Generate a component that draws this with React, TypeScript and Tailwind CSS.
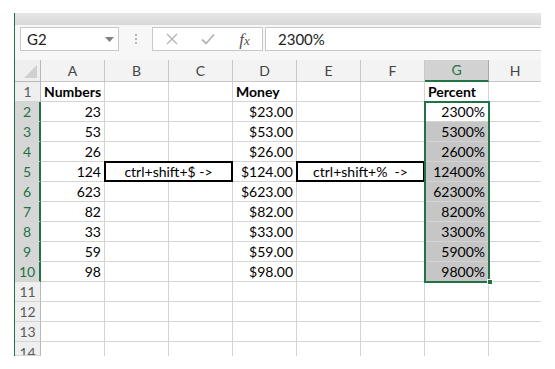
import React from "react";

const cols = ["A", "B", "C", "D", "E", "F", "G", "H"];
const nums = ["23", "53", "26", "124", "623", "82", "33", "59", "98"];
const money = ["$23.00", "$53.00", "$26.00", "$124.00", "$623.00", "$82.00", "$33.00", "$59.00", "$98.00"];
const pct = ["2300%", "5300%", "2600%", "12400%", "62300%", "8200%", "3300%", "5900%", "9800%"];

function Cell({ children, className = "" }: { children?: React.ReactNode; className?: string }) {
  return (
    <div className={`h-[20px] border-r border-b border-[#d4d4d4] px-[3px] flex items-center leading-none overflow-visible whitespace-nowrap ${className}`}>
      {children}
    </div>
  );
}

export default function App() {
  const rows: React.ReactNode[] = [];
  for (let r = 1; r <= 14; r++) {
    const sel = r >= 2 && r <= 10;
    const last = r === 14;
    const h = last ? "h-[14px]" : "h-[20px]";
    rows.push(
      <div
        key={`h${r}`}
        className={`${h} flex items-center justify-center text-[14px] leading-none border-b border-[#d4d4d4] ${
          sel ? "bg-[#d6d6d6] text-[#217346] border-r-2 border-r-[#217346]" : "bg-[#efefef] text-[#5b5b5b] border-r border-r-[#b8b8b8]"
        } ${last ? "items-start overflow-hidden" : ""}`}
      >
        <span className={last ? "pt-[4px]" : ""}>{r}</span>
      </div>
    );
    const i = r - 2;
    rows.push(
      <Cell key={`a${r}`} className={`${h} ${r === 1 ? "font-bold justify-start" : "justify-end"}`}>
        {r === 1 ? "Numbers" : sel ? nums[i] : ""}
      </Cell>
    );
    if (r === 5) {
      rows.push(
        <div key={`bc${r}`} className="col-span-2 h-[20px] relative border-b border-r border-[#d4d4d4]">
          <div className="absolute left-[-1px] top-[-1px] right-[-1px] bottom-[-1px] border-2 border-black flex items-center justify-center">
            ctrl+shift+$ -&gt;
          </div>
        </div>
      );
    } else {
      rows.push(<Cell key={`b${r}`} className={h} />);
      rows.push(<Cell key={`c${r}`} className={h} />);
    }
    rows.push(
      <Cell key={`d${r}`} className={`${h} ${r === 1 ? "font-bold justify-start" : "justify-end"}`}>
        {r === 1 ? "Money" : sel ? money[i] : ""}
      </Cell>
    );
    if (r === 5) {
      rows.push(
        <div key={`ef${r}`} className="col-span-2 h-[20px] relative border-b border-r border-[#d4d4d4]">
          <div className="absolute left-[-1px] top-[-1px] right-[-1px] bottom-[-1px] border-2 border-black flex items-center justify-center whitespace-pre">
            {"ctrl+shift+%  ->"}
          </div>
        </div>
      );
    } else {
      rows.push(<Cell key={`e${r}`} className={h} />);
      rows.push(<Cell key={`f${r}`} className={h} />);
    }
    rows.push(
      <Cell
        key={`g${r}`}
        className={`${h} ${r === 1 ? "font-bold justify-start" : "justify-end"} ${r >= 3 && r <= 10 ? "bg-[#c6c6c6]" : ""}`}
      >
        {r === 1 ? "Percent" : sel ? pct[i] : ""}
      </Cell>
    );
    rows.push(<Cell key={`hh${r}`} className={`${h} border-r-0`} />);
  }

  return (
    <div
      className="w-[555px] h-[369px] bg-white overflow-hidden text-[14px] text-black"
      style={{ fontFamily: "Lato, 'Liberation Sans', sans-serif" }}
    >
      <div className="ml-[14px] mt-[13px] w-[527px] h-[343px] border-l border-[#217346] flex flex-col overflow-hidden">
        <div className="h-[12px] bg-gradient-to-b from-[#e6e6e6] to-[#d9d9d9] shrink-0" />
        <div className="h-[35px] shrink-0 bg-[#f7f7f7] flex items-start pt-[2px] pl-[5px]">
          <div className="w-[99px] h-[24px] bg-white border border-[#c8c8c8] flex items-center pl-[6px] pr-[4px] justify-between text-[15px] text-[#222]">
            <span>G2</span>
            <svg width="9" height="5" viewBox="0 0 9 5">
              <path d="M0 0 L9 0 L4.5 5 Z" fill="#808080" />
            </svg>
          </div>
          <div className="w-[33px] h-[24px] flex flex-col items-center justify-center gap-[2px]">
            <div className="w-[2px] h-[2px] bg-[#b5b5b5]" />
            <div className="w-[2px] h-[2px] bg-[#b5b5b5]" />
            <div className="w-[2px] h-[2px] bg-[#b5b5b5]" />
          </div>
          <div className="w-[111px] h-[24px] bg-white border border-[#c8c8c8] flex items-center">
            <div className="w-[36px] flex justify-center pl-[2px]">
              <svg width="12" height="12" viewBox="0 0 12 12">
                <path d="M1 1 L11 11 M11 1 L1 11" stroke="#b5b5b5" strokeWidth="1.4" />
              </svg>
            </div>
            <div className="w-[38px] flex justify-center">
              <svg width="14" height="12" viewBox="0 0 14 12">
                <path d="M1 6.5 L5 10.5 L13 1.5" stroke="#b5b5b5" strokeWidth="1.8" fill="none" />
              </svg>
            </div>
            <div className="flex-1 flex justify-center">
              <span
                className="italic text-[#505050] text-[17px] leading-none"
                style={{ fontFamily: "'Liberation Serif', serif" }}
              >
                f<span className="text-[13px]">x</span>
              </span>
            </div>
          </div>
          <div className="ml-[2px] flex-1 h-[24px] bg-white border border-[#c8c8c8] border-r-0 flex items-center pl-[12px] text-[15px] text-[#222]">
            2300%
          </div>
        </div>
        <div className="relative grid grid-cols-[26px_repeat(7,64px)_53px] text-[14px]">
          <div className="h-[22px] bg-[#efefef] border-r border-b border-[#b8b8b8] relative">
            <svg className="absolute right-[3px] bottom-[3px]" width="13" height="13" viewBox="0 0 13 13">
              <path d="M13 0 L13 13 L0 13 Z" fill="#d0d0d0" />
            </svg>
          </div>
          {cols.map((c) =>
            c === "G" ? (
              <div
                key={c}
                className="h-[22px] bg-[#d2d2d2] text-[#217346] border-r border-[#ababab] border-b-2 border-b-[#217346] flex items-center justify-center leading-none"
              >
                {c}
              </div>
            ) : (
              <div
                key={c}
                className="h-[22px] bg-[#f3f3f3] text-[#444] border-r border-b border-[#c8c8c8] flex items-center justify-center leading-none"
              >
                {c}
              </div>
            )
          )}
          {rows}
          <div className="absolute left-[409px] top-[41px] w-[66px] h-[182px] border-2 border-[#217346] pointer-events-none" />
          <div className="absolute left-[472px] top-[219px] w-[6px] h-[6px] bg-[#217346] border border-white" />
        </div>
      </div>
    </div>
  );
}
